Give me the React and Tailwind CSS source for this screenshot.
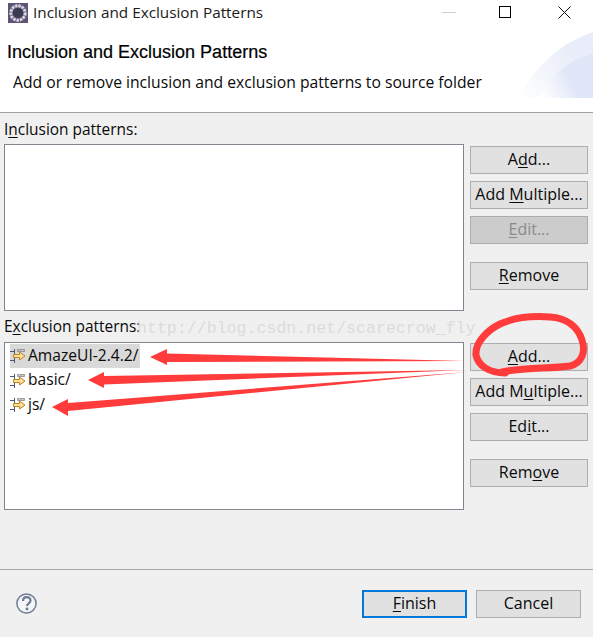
const segoe = { fontFamily: '"Open Sans", "Noto Sans", sans-serif' }

function Key({ children }) {
    return <span className="underline underline-offset-2 decoration-1">{children}</span>
}

function Btn({ children, disabled, className = '' }) {
    return (
        <div className={`h-[28px] w-[118px] shrink-0 flex items-center justify-center pb-[2px] border border-[#adadad] text-[16px] ${disabled ? 'bg-[#cccccc] text-[#8a8a8a]' : 'bg-[#e1e1e1] text-[#0a0a0a]'} ${className}`}>
            <span>{children}</span>
        </div>
    )
}

function PatternIcon() {
    return (
        <svg width="16" height="16" viewBox="0 0 16 16" className="shrink-0">
            <path d="M0 3.5h4M4.5 1v5M0 12.5h4M4.5 10v5" stroke="#4a5a70" strokeWidth="1" fill="none" />
            <path d="M7.5 1.5h7v2h-7z" fill="#c4c4c4" stroke="#808080" strokeWidth="0.7" />
            <path d="M3.5 6.5h6V4L15 8l-5.500 4V9.500h-6z" fill="#fbdf9a" stroke="#c08418" strokeWidth="1" />
        </svg>
    )
}

function PatternRow({ label, selected }) {
    return (
        <div className="h-[24.5px] flex items-center pl-[5px]">
            <div className={`flex items-center h-[24px] pr-[2px] ${selected ? 'bg-[#d9d9d9]' : ''}`}>
                <PatternIcon />
                <span className="ml-[2px] pb-[2px] text-[15.6px] text-[#0a0a0a]">{label}</span>
            </div>
        </div>
    )
}

export default function App() {
    return (
        <div className="relative w-[593px] h-[637px] overflow-hidden bg-[#f0f0f0]" style={segoe}>
            {/* title bar */}
            <div className="h-[28px] bg-white flex items-center pl-[8px]">
                <svg width="20" height="20" viewBox="0 0 20 20" className="mb-[2px]">
                    <rect width="20" height="20" fill="#5f5478" />
                    <circle cx="10" cy="10" r="7.2" fill="none" stroke="#d8d6de" strokeWidth="3" strokeDasharray="2.6 0.8" />
                    <circle cx="10" cy="10" r="5" fill="#3a3a50" />
                </svg>
                <span className="ml-[5px] pb-[3px] text-[15.3px] text-[#1a1a1a]">Inclusion and Exclusion Patterns</span>
                <div className="ml-auto flex items-center pb-[4px]">
                    <div className="w-[14px] h-px bg-[#cfcfcf] mr-[43px]" />
                    <div className="w-[12px] h-[12px] border border-black mr-[47px]" />
                    <svg width="13" height="13" viewBox="0 0 13 13" className="mr-[22px]">
                        <path d="M0.5 0.5l12 12M12.5 0.5l-12 12" stroke="#111" strokeWidth="1" />
                    </svg>
                </div>
            </div>

            {/* banner */}
            <div className="relative h-[85px] bg-white border-b border-[#a0a0a0]">
                <svg width="75" height="71" viewBox="0 0 75 71" className="absolute right-0 top-[3px]">
                    <defs>
                        <linearGradient id="fade" x1="0" x2="1" y1="1" y2="0">
                            <stop offset="0" stopColor="#ffffff" />
                            <stop offset="0.7" stopColor="#e8edf9" />
                        </linearGradient>
                        <linearGradient id="fade2" x1="0" x2="1" y1="0.8" y2="0.4">
                            <stop offset="0" stopColor="#ffffff" />
                            <stop offset="0.6" stopColor="#dfe6f7" />
                        </linearGradient>
                    </defs>
                    <path d="M0 67C18 35 42 12 75 1V67Z" fill="url(#fade)" />
                    <path d="M20 67C32 44 52 28 75 23V67Z" fill="url(#fade2)" />
                </svg>
                <div className="pl-[7px] pt-[14px] text-[18px] leading-[20px] text-black" style={{ fontFamily: '"Liberation Sans", Arial, sans-serif', WebkitTextStroke: '0.2px black' }}>
                    Inclusion and Exclusion Patterns
                </div>
                <div className="relative pl-[13px] pt-[10px] text-[15.7px] leading-[20px] text-[#0a0a0a]">
                    Add or remove inclusion and exclusion patterns to source folder
                </div>
            </div>

            {/* inclusion */}
            <div className="pl-[4px] h-[456px]">
                <div className="pt-[6px] h-[31px] text-[15.45px] leading-[20px] text-[#0a0a0a]">
                    I<Key>n</Key>clusion patterns:
                </div>
                <div className="flex">
                    <div className="w-[460px] h-[167px] bg-white border border-[#82878f]" />
                    <div className="flex flex-col ml-[6px] pt-[2px]">
                        <div className="flex flex-col gap-[7px]">
                            <Btn>A<Key>d</Key>d...</Btn>
                            <Btn>Add <Key>M</Key>ultiple...</Btn>
                            <Btn disabled><Key>E</Key>dit...</Btn>
                        </div>
                        <Btn className="mt-[18px]"><Key>R</Key>emove</Btn>
                    </div>
                </div>

                <div className="pt-[5px] h-[31px] text-[15.45px] leading-[20px] text-[#0a0a0a]">
                    E<Key>x</Key>clusion patterns:
                </div>
                <div className="flex">
                    <div className="w-[460px] h-[168px] bg-white border border-[#82878f] pt-[1px]">
                        <PatternRow label="AmazeUI-2.4.2/" selected />
                        <PatternRow label="basic/" />
                        <PatternRow label="js/" />
                    </div>
                    <div className="flex flex-col ml-[6px] pt-px">
                        <div className="flex flex-col gap-[7px]">
                            <Btn><Key>A</Key>dd...</Btn>
                            <Btn>Add M<Key>u</Key>ltiple...</Btn>
                            <Btn>Ed<Key>i</Key>t...</Btn>
                        </div>
                        <Btn className="mt-[18px]">Rem<Key>o</Key>ve</Btn>
                    </div>
                </div>
            </div>

            {/* footer */}
            <div className="border-t border-[#a8a8a8] h-[68px] flex pl-[16px] pr-[12px] pt-[20px]">
                <svg width="21" height="23" viewBox="0 0 21 23" className="mt-[2px]">
                    <circle cx="10.5" cy="11.5" r="9.6" fill="#f4f5f7" stroke="#6d7c93" strokeWidth="1.5" />
                    <path d="M7 9c0-5 7.500-5 7.500-.5 0 3-3.500 2.600-3.500 5.500" fill="none" stroke="#6d7c93" strokeWidth="2.2" />
                    <circle cx="11" cy="17" r="1.4" fill="#6d7c93" />
                </svg>
                <div className="ml-auto flex gap-[9px]">
                    <div className="w-[105px] h-[28px] flex items-center justify-center pb-[2px] border-2 border-[#0078d7] bg-[#e1e1e1] text-[16px] text-[#0a0a0a]">
                        <span><Key>F</Key>inish</span>
                    </div>
                    <div className="w-[105px] h-[28px] flex items-center justify-center pb-[2px] border border-[#adadad] bg-[#e1e1e1] text-[16px] text-[#0a0a0a]">
                        Cancel
                    </div>
                </div>
            </div>

            {/* watermark */}
            <div className="absolute left-[137px] top-[319px] text-[16.6px] leading-[20px] whitespace-nowrap text-[#dcdcd8]" style={{ fontFamily: '"Liberation Mono", monospace' }}>
                http://blog.csdn.net/scarecrow_fly
            </div>

            {/* red marks drawn over the dialog */}
            <svg width="593" height="637" viewBox="0 0 593 637" className="absolute left-0 top-0 pointer-events-none">
                <path d="M150 357L167 349V353.500L465 361L167 362V365Z" fill="#ff3b3b" />
                <path d="M88 380L104 372V376L467 370L104 384.500V388Z" fill="#ff3b3b" />
                <path d="M52 407L68 399V403L467 372L68 411V416Z" fill="#ff3b3b" />
                <path d="M505 373C490 373 478 366 476 355C475 342 488 330 500 324C515 317 535 316 550 317C568 318 578 328 582 340C586 352 582 363 570 366C550 369 525 367 502 372" fill="none" stroke="#ff3b3b" strokeWidth="7" strokeLinecap="round" />
            </svg>
        </div>
    )
}
